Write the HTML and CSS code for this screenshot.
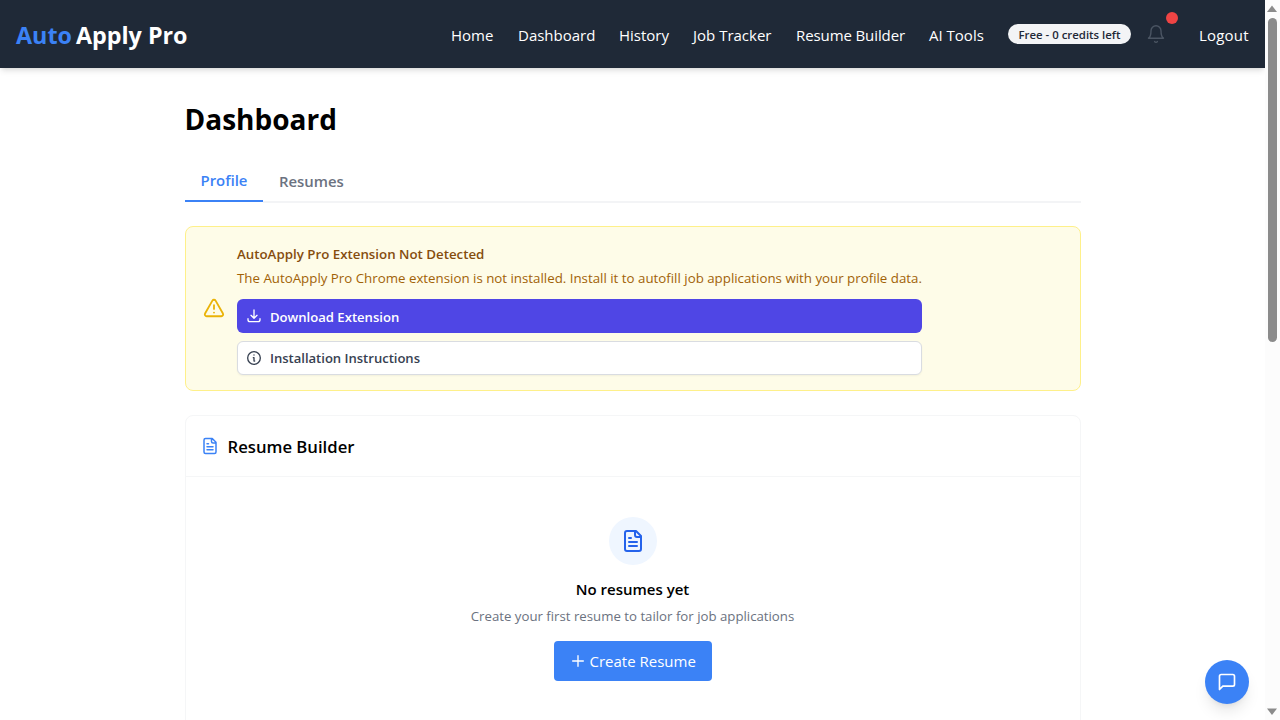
FILE: index.html
```html
<!DOCTYPE html>
<html lang="en">
<head>
<meta charset="utf-8">
<title>AutoApply Pro - Dashboard</title>
<link rel="stylesheet" href="styles.css">
</head>
<body>
<div class="window">
  <div class="page">
    <header class="navbar">
      <a class="brand"><span class="brand-accent">Auto</span><span class="brand-rest">Apply Pro</span></a>
      <nav class="nav">
        <a class="home">Home</a><a class="dash">Dashboard</a><a class="hist">History</a><a class="jobs">Job Tracker</a><a class="builder">Resume Builder</a><a class="tools">AI Tools</a>
        <div class="status">
          <span class="credits">Free - 0 credits left</span>
          <span class="bell">
            <svg width="20" height="20" viewBox="0 0 24 24"><path d="M6 8a6 6 0 0 1 12 0c0 7 3 9 3 9H3s3-2 3-9"/><path d="M10.3 21a1.94 1.94 0 0 0 3.4 0"/></svg>
            <i class="dot"></i>
          </span>
        </div>
        <a class="logout">Logout</a>
      </nav>
    </header>
    <main class="content">
      <h1 class="title">Dashboard</h1>
      <div class="tabs"><a class="tab active">Profile</a><a class="tab resumes">Resumes</a></div>
      <section class="alert">
        <svg class="warn" width="22" height="22" viewBox="0 0 24 24"><path d="m21.73 18-8-14a2 2 0 0 0-3.48 0l-8 14A2 2 0 0 0 4 21h16a2 2 0 0 0 1.73-3Z"/><path d="M12 9v4M12 17h.01"/></svg>
        <div class="alert-body">
          <h2 class="alert-title">AutoApply Pro Extension Not Detected</h2>
          <p class="alert-text">The AutoApply Pro Chrome extension is not installed. Install it to autofill job applications with your profile data.</p>
          <a class="btn download"><svg width="16" height="16" viewBox="0 0 24 24"><path d="M3 16v1.500a3 3 0 0 0 3 3h12a3 3 0 0 0 3-3V16M7.500 11l4.500 4.500 4.500-4.500M12 15V3"/></svg><span>Download Extension</span></a>
          <a class="btn instructions"><svg width="16" height="16" viewBox="0 0 24 24"><circle cx="12" cy="12" r="9.500"/><path d="M11 11.500h1v5h1M12 7.500h.01"/></svg><span>Installation Instructions</span></a>
        </div>
      </section>
      <section class="card">
        <div class="card-head">
          <svg width="18" height="18" viewBox="0 0 24 24"><path d="M15 2H6a2 2 0 0 0-2 2v16a2 2 0 0 0 2 2h12a2 2 0 0 0 2-2V7ZM14 2v4a2 2 0 0 0 2 2h4M10 9H8M16 13H8M16 17H8"/></svg>
          <h2 class="card-title">Resume Builder</h2>
        </div>
        <div class="empty">
          <div class="circle"><svg width="24" height="24" viewBox="0 0 24 24"><path d="M15 2H6a2 2 0 0 0-2 2v16a2 2 0 0 0 2 2h12a2 2 0 0 0 2-2V7ZM14 2v4a2 2 0 0 0 2 2h4M10 9H8M16 13H8M16 17H8"/></svg></div>
          <h3 class="empty-title">No resumes yet</h3>
          <p class="empty-text">Create your first resume to tailor for job applications</p>
          <a class="create"><svg width="16" height="16" viewBox="0 0 24 24"><path d="M4 12h16M12 4v16"/></svg><span>Create Resume</span></a>
        </div>
      </section>
    </main>
  </div>
  <div class="scrollbar">
    <svg width="15" height="720" viewBox="0 0 15 720"><path d="M7 5.500 12 12H2Z"/><rect x="3" y="18" width="9" height="324" rx="4.500"/><path d="M2 708.500h10L7 715Z"/></svg>
  </div>
  <a class="chat"><svg width="20" height="20" viewBox="0 0 24 24"><path d="M21 15a2 2 0 0 1-2 2H7l-4 4V5a2 2 0 0 1 2-2h14a2 2 0 0 1 2 2z"/></svg></a>
</div>
</body>
</html>
```
FILE: styles.css
```css
* { box-sizing: border-box; }
body { margin: 0; background: #fff; color: #000; font-family: "Open Sans", "Noto Sans", sans-serif; overflow: hidden; }
h1, h2, h3, p { margin: 0; }
a, h1, h2, h3, p, span { white-space: nowrap; }
svg { display: block; flex: none; fill: none; stroke: currentColor; stroke-width: 2; stroke-linecap: round; stroke-linejoin: round; }

.window { display: flex; width: 1280px; height: 720px; overflow: hidden; position: relative; }
.page { width: 1265px; height: 720px; overflow: hidden; }

.navbar { display: flex; align-items: center; justify-content: space-between; height: 68px; padding: 2px 16px 0; background: #1f2937; color: #fff; box-shadow: 0 4px 6px -1px rgba(0, 0, 0, .1), 0 2px 4px -2px rgba(0, 0, 0, .1); }
.brand { display: flex; gap: 4px; font-size: 23.3px; font-weight: 700; line-height: 32px; }
.brand-accent { color: #3b82f6; }
.nav { display: grid; grid-template-columns: 43px 77px 50px 79px 109px 55px 167px 50px; column-gap: 24px; align-items: center; font-size: 15px; line-height: 24px; }
.builder { letter-spacing: -.1px; }
.logout { letter-spacing: .2px; }
.status { display: flex; align-items: center; gap: 7px; margin-top: -3px; }
.credits { width: 123px; height: 20px; border-radius: 10px; background: #f3f4f6; color: #1f2937; font-size: 11.4px; font-weight: 600; line-height: 21px; text-align: center; }
.bell { position: relative; padding: 8px; color: #4b5563; }
.bell svg { stroke-width: 1.7; }
.dot { position: absolute; top: -4px; right: -4px; width: 12px; height: 12px; border-radius: 50%; background: #ef4444; }

.content { width: 896px; margin: 0 auto; padding-top: 33px; }
.title { font-size: 28px; font-weight: 700; line-height: 36px; }
.tabs { display: flex; height: 43px; margin-top: 23px; margin-bottom: 23px; align-items: flex-start; font-size: 14.9px; font-weight: 600; line-height: 24px; box-shadow: inset 0 -2px #f3f4f6; }
.tab { height: 42px; padding: 9px 16px 0; color: #6b7280; }
.tab.active { width: 78.5px; height: 42px; padding-top: 8px; border-bottom: 2px solid #3b82f6; color: #3b82f6; box-shadow: 0 1px #fff; }

.alert { display: flex; align-items: center; gap: 12.5px; height: 165px; padding: 0 17px; border: 1px solid #fef08a; border-radius: 8px; background: #fefce8; }
.warn { margin-top: -2px; color: #eab308; }
.alert-body { width: 685px; padding-top: 2px; }
.alert-title { color: #854d0e; font-size: 13.3px; font-weight: 600; line-height: 20px; }
.alert-text { margin-top: 4px; margin-bottom: 11px; color: #a16207; font-size: 13.31px; line-height: 20px; }
.btn { display: flex; align-items: center; gap: 8px; height: 34px; padding: 0 9px; border-radius: 6px; font-size: 13.1px; font-weight: 600; line-height: 20px; }
.btn span { padding-top: 2px; }
.download { background: #4f46e5; color: #fff; }
.instructions { margin-top: 8px; border: 1px solid #d9dce1; padding: 0 8px; background: #fff; color: #374151; box-shadow: 0 1px 2px rgba(0, 0, 0, .05); }
.instructions span { padding-top: 0; letter-spacing: -.03px; }

.card { height: 330px; margin-top: 24px; border: 1px solid #f5f6f7; border-radius: 8px; }
.card-head { display: flex; align-items: center; gap: 8.5px; height: 61px; padding: 0 15.5px; border-bottom: 1px solid #f5f6f7; }
.card-head svg { color: #3b82f6; }
.card-title { font-size: 16.7px; font-weight: 600; line-height: 28px; padding-top: 2px; }
.empty { display: flex; flex-direction: column; align-items: center; padding-top: 40px; }
.circle { display: flex; align-items: center; justify-content: center; width: 48px; height: 48px; border-radius: 50%; background: #eff6ff; color: #2563eb; }
.empty-title { margin-top: 12px; font-size: 15px; font-weight: 600; line-height: 24px; }
.empty-text { margin-top: 5px; color: #6b7280; font-size: 13.22px; line-height: 20px; }
.create { display: flex; align-items: center; gap: 4px; height: 40px; width: 158px; margin-top: 15px; padding: 0 16px; border-radius: 4px; background: #3b82f6; color: #fff; font-size: 15px; }

.scrollbar { width: 15px; height: 720px; background: #fcfcfc; }
.scrollbar svg { fill: #8b8b8b; stroke: #8b8b8b; stroke-width: 0; }
.chat { position: absolute; left: 1205px; top: 660px; display: flex; align-items: center; justify-content: center; width: 44px; height: 44px; border-radius: 50%; background: #3b82f6; color: #fff; box-shadow: 0 10px 15px -3px rgba(0, 0, 0, .1), 0 4px 6px -4px rgba(0, 0, 0, .1); }
```
